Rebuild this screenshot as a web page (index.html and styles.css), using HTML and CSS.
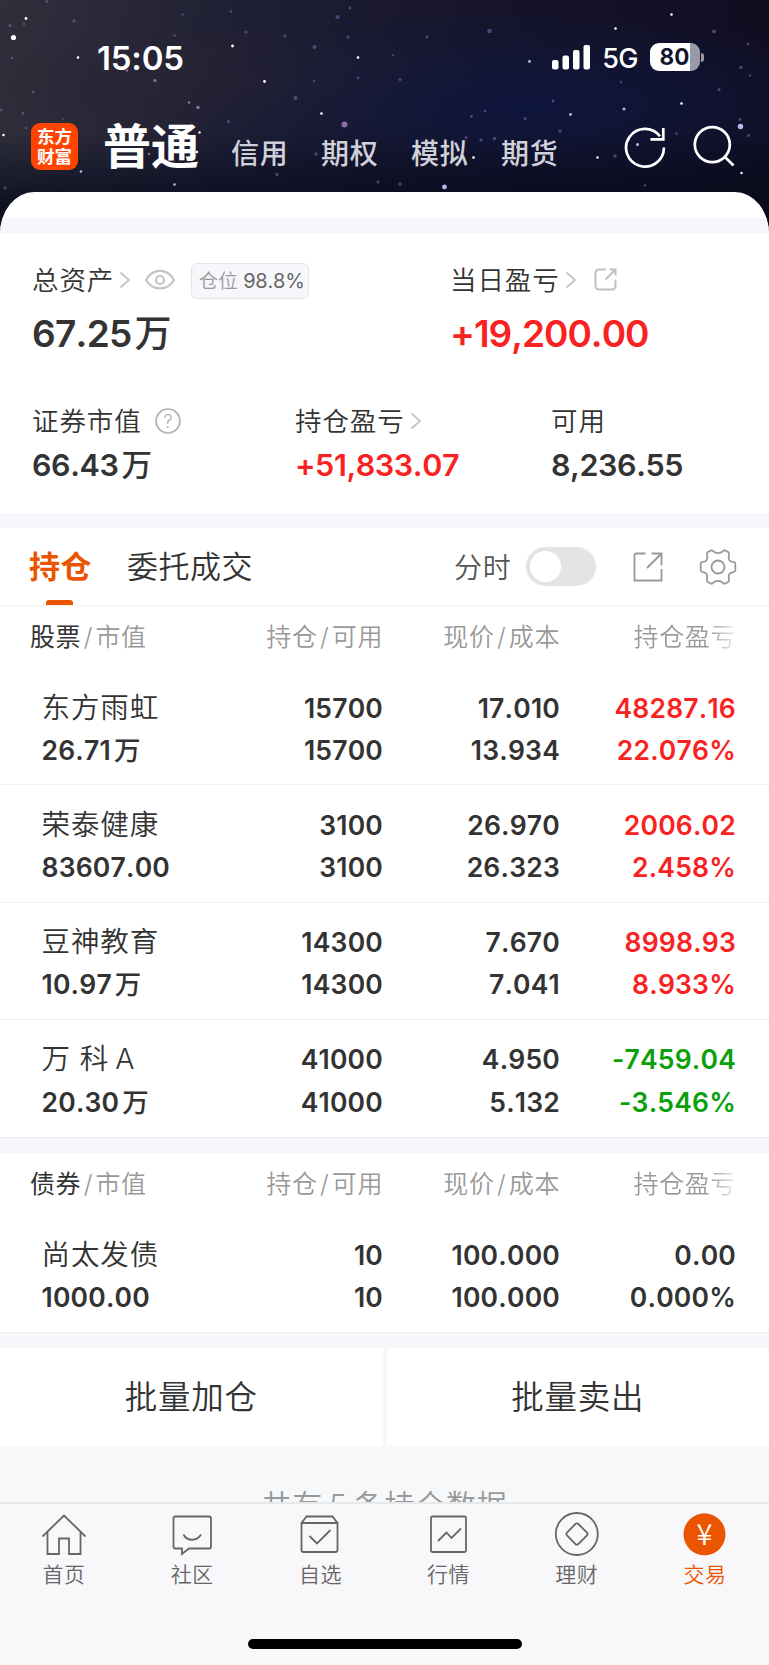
FILE: index.html
```
<!DOCTYPE html>
<html lang="zh-CN">
<head>
	<meta charset="UTF-8">
	<title>持仓</title>
	<link rel="stylesheet" href="styles.css">
</head>
<body>
<div class="app">

	<header class="top">
		<svg class="stars" viewBox="0 0 769 240">
			<g fill="#fff">
				<circle cx="13.5" cy="37.5" r="2.6"/><circle cx="26" cy="18.5" r="1.4"/><circle cx="78" cy="57.5" r="1.3"/>
				<circle cx="232.5" cy="46" r="1.4"/><circle cx="264.5" cy="81.5" r="1.4"/><circle cx="321.5" cy="113.5" r="1.3"/>
				<circle cx="358" cy="57.5" r="1.3"/><circle cx="3.5" cy="135" r="1.3"/><circle cx="199.5" cy="132.5" r="1.2"/>
				<circle cx="197" cy="152" r="1.2"/><circle cx="615.5" cy="28.5" r="1.3"/><circle cx="671.5" cy="14.5" r="1.3"/>
				<circle cx="681.5" cy="103.5" r="1.3"/><circle cx="473.5" cy="157.5" r="1.3"/><circle cx="597.5" cy="157.5" r="1.2"/>
				<circle cx="741.5" cy="173" r="1.2"/>
			</g>
			<g fill="#b4b9f0">
				<circle cx="740.5" cy="126.5" r="2.7"/><circle cx="444.5" cy="187" r="2.4"/><circle cx="529.5" cy="61.5" r="1.4"/>
				<circle cx="570.5" cy="114.5" r="1.4"/><circle cx="624" cy="109" r="1.5"/><circle cx="637.5" cy="144.5" r="1.5"/>
				<circle cx="518" cy="147" r="2"/><circle cx="81" cy="171.5" r="1.3"/><circle cx="174.5" cy="184.5" r="1.3"/>
				<circle cx="277" cy="153" r="1.5"/>
			</g>
			<g fill="#6c68b0" opacity=".6">
				<circle cx="47" cy="1.5" r="1.5"/><circle cx="10" cy="25.5" r="1.5"/><circle cx="24" cy="24" r="1.3"/>
				<circle cx="74" cy="21" r="1.8"/><circle cx="12" cy="58" r="1.3"/><circle cx="33" cy="92" r="1.4"/>
				<circle cx="182.5" cy="14.5" r="1.3"/><circle cx="174.5" cy="35.5" r="1.3"/><circle cx="246" cy="32" r="1.6"/>
				<circle cx="231" cy="11.5" r="1.3"/><circle cx="285" cy="36" r="1.4"/><circle cx="314.5" cy="47" r="2"/>
				<circle cx="337.5" cy="17" r="2"/><circle cx="350" cy="8" r="1.4"/><circle cx="348" cy="37" r="1.5"/>
				<circle cx="358" cy="78" r="1.4"/><circle cx="295.5" cy="98" r="2"/><circle cx="314" cy="81" r="1.2"/>
				<circle cx="228.5" cy="121.5" r="1.5"/><circle cx="316" cy="154" r="1.7"/><circle cx="23" cy="113.5" r="1.4"/>
				<circle cx="1" cy="110" r="1.5"/><circle cx="26" cy="128" r="1.3"/><circle cx="63" cy="119" r="1"/>
				<circle cx="427" cy="37" r="1.4"/><circle cx="489.5" cy="31" r="2.2"/><circle cx="400" cy="79.5" r="1.5"/>
				<circle cx="393" cy="55" r="1.1"/><circle cx="553" cy="101" r="1.4"/><circle cx="485" cy="111" r="1.3"/>
				<circle cx="471.5" cy="116.5" r="1.4"/><circle cx="525" cy="118.5" r="1.5"/><circle cx="560" cy="131" r="1.8"/>
				<circle cx="466" cy="137.5" r="1.5"/><circle cx="481" cy="140" r="1.6"/><circle cx="494.5" cy="138.5" r="1.8"/>
				<circle cx="676.5" cy="133.5" r="1.3"/><circle cx="714" cy="31.5" r="2"/><circle cx="748" cy="44" r="1.4"/>
				<circle cx="741" cy="67.5" r="1.7"/><circle cx="719" cy="89.5" r="1.5"/><circle cx="750" cy="75.5" r="1.2"/>
				<circle cx="740" cy="119.5" r="1.5"/><circle cx="748.5" cy="135.5" r="1.6"/><circle cx="615" cy="156" r="1.7"/>
				<circle cx="645" cy="185.5" r="1.2"/><circle cx="400" cy="184" r="1.7"/><circle cx="378" cy="182" r="1.5"/>
				<circle cx="277" cy="174.5" r="1.7"/><circle cx="5" cy="188" r="1.4"/><circle cx="621" cy="82" r="1.2"/>
			</g>
			<g fill="#a878b8" opacity=".85">
				<circle cx="344.5" cy="124.5" r="3"/><circle cx="198" cy="107.5" r="1.8"/><circle cx="189" cy="102.5" r="1.3"/>
				<circle cx="155" cy="80.5" r="1.6"/><circle cx="127" cy="70.5" r="1.2"/><circle cx="149" cy="154" r="1.2"/>
			</g>
		</svg>

		<div class="status">
			<span class="time">15:05</span>
			<div class="status_right">
				<svg class="signal" width="38" height="25" viewBox="0 0 38 25">
					<rect x="0" y="15" width="6.5" height="9.5" rx="2"/>
					<rect x="10.5" y="10.5" width="6.5" height="14" rx="2"/>
					<rect x="21" y="5" width="6.5" height="19.5" rx="2"/>
					<rect x="31.5" y="0" width="6.5" height="24.5" rx="2"/>
				</svg>
				<span class="net">5G</span>
				<div class="battery">80</div>
				<i class="battery_tip"></i>
			</div>
		</div>

		<nav class="accounts">
			<div class="logo"><span>东方</span><span>财富</span></div>
			<b class="current">普通</b>
			<span>信用</span>
			<span>期权</span>
			<span>模拟</span>
			<span>期货</span>
			<svg class="icon_reload" width="44" height="44" viewBox="0 0 44 44">
				<path d="M40.900 22.500A18.900 18.900 0 1 1 37 11.200M40.300 3v11.300H27.500"/>
			</svg>
			<svg class="icon_search" width="44" height="44" viewBox="0 0 44 44">
				<circle cx="21.3" cy="19.6" r="17.5"/><path d="M33.500 31.500l9 9"/>
			</svg>
		</nav>
	</header>

	<main class="sheet">
		<div class="gap gap_first"></div>

		<section class="summary">
			<div class="sum_big">
				<div class="cell">
					<div class="label">总资产
						<svg class="chev" width="12" height="18" viewBox="0 0 12 18"><path d="M1.500 1.500L10 9l-8.500 7.500"/></svg>
						<svg class="eye" width="30" height="22" viewBox="0 0 30 22"><path d="M1 11C7.500-1.200 22.500-1.200 29 11 22.500 22.200 7.500 22.200 1 11z"/><circle cx="15" cy="11" r="4"/></svg>
						<span class="badge">仓位 <em>98.8%</em></span>
					</div>
					<div class="num">67.25<span class="wan">万</span></div>
				</div>
				<div class="cell">
					<div class="label">当日盈亏
						<svg class="chev" width="12" height="18" viewBox="0 0 12 18"><path d="M1.500 1.500L10 9l-8.500 7.500"/></svg>
						<svg class="share" width="23" height="23" viewBox="0 0 23 23"><path d="M12 1.500H5a3.500 3.500 0 0 0-3.500 3.500v13A3.500 3.500 0 0 0 5 21.500h13a3.500 3.500 0 0 0 3.500-3.500v-6.500M15.500 1.500h6v6M21 2L11.500 11.500"/></svg>
					</div>
					<div class="num red">+19,200.00</div>
				</div>
			</div>
			<div class="sum_small">
				<div class="cell">
					<div class="label">证券市值
						<svg class="help" width="26" height="26" viewBox="0 0 26 26"><circle cx="13" cy="13" r="11.9"/><text x="13" y="19.5">?</text></svg>
					</div>
					<div class="num">66.43<span class="wan">万</span></div>
				</div>
				<div class="cell">
					<div class="label">持仓盈亏
						<svg class="chev" width="12" height="18" viewBox="0 0 12 18"><path d="M1.500 1.500L10 9l-8.500 7.500"/></svg>
					</div>
					<div class="num red">+51,833.07</div>
				</div>
				<div class="cell">
					<div class="label">可用</div>
					<div class="num">8,236.55</div>
				</div>
			</div>
		</section>

		<div class="gap"></div>

		<div class="tabs">
			<b class="tab active">持仓</b>
			<span class="tab">委托成交</span>
			<span class="minute">分时</span>
			<i class="switch"></i>
			<svg class="export" width="30" height="30" viewBox="0 0 30 30"><path d="M12.500 1.500H3a1.500 1.500 0 0 0-1.500 1.500v25.500h27V17M18.500 1.500h10v12M28.500 1.500L14 16"/></svg>
			<svg class="gear" width="38" height="36" viewBox="0 0 38 36"><path d="M8.500 3.200L12.500 1.200C14 1.200 14.500 4.200 19 4.200S24 1.200 25.500 1.200L29.500 3.200C31.500 5 28 7 30.500 11.200C32.500 14 36.300 12 36.300 14.500V21.500C36.300 24 32.500 22 30.500 24.800C28 29 31.500 31 29.500 32.800L25.500 34.800C24 34.800 23.500 31.800 19 31.800S14 34.800 12.500 34.800L8.500 32.800C6.500 31 10 29 7.500 24.800C5.500 22 1.700 24 1.700 21.500V14.500C1.700 12 5.500 14 7.500 11.200C10 7 6.500 5 8.500 3.200z"/><circle cx="19" cy="18" r="6.5"/></svg>
		</div>

		<section class="table">
			<div class="thead">
				<span class="kind"><b>股票</b><i>/</i>市值</span><span>持仓<i>/</i>可用</span><span>现价<i>/</i>成本</span><span class="fade">持仓盈亏</span>
			</div>
			<div class="row">
				<div><span class="name">东方雨虹</span><br>26.71<span class="wan">万</span></div>
				<div>15700<br>15700</div>
				<div>17.010<br>13.934</div>
				<div class="red">48287.16<br>22.076%</div>
			</div>
			<div class="row">
				<div><span class="name">荣泰健康</span><br>83607.00</div>
				<div>3100<br>3100</div>
				<div>26.970<br>26.323</div>
				<div class="red">2006.02<br>2.458%</div>
			</div>
			<div class="row">
				<div><span class="name">豆神教育</span><br>10.97<span class="wan">万</span></div>
				<div>14300<br>14300</div>
				<div>7.670<br>7.041</div>
				<div class="red">8998.93<br>8.933%</div>
			</div>
			<div class="row">
				<div><span class="name">万 科<span class="latin">A</span></span><br>20.30<span class="wan">万</span></div>
				<div>41000<br>41000</div>
				<div>4.950<br>5.132</div>
				<div class="green">-7459.04<br>-3.546%</div>
			</div>
		</section>

		<div class="gap gap_mid"></div>

		<section class="table">
			<div class="thead">
				<span class="kind"><b>债券</b><i>/</i>市值</span><span>持仓<i>/</i>可用</span><span>现价<i>/</i>成本</span><span class="fade">持仓盈亏</span>
			</div>
			<div class="row">
				<div><span class="name">尚太发债</span><br>1000.00</div>
				<div>10<br>10</div>
				<div>100.000<br>100.000</div>
				<div>0.00<br>0.000%</div>
			</div>
		</section>

		<div class="gap gap_mid"></div>

		<div class="batch">
			<div>批量加仓</div>
			<div>批量卖出</div>
		</div>

		<div class="total">共有<span>5</span>条持仓数据</div>
	</main>

	<footer class="bottom">
		<nav class="menu">
			<div>
				<svg width="46" height="46" viewBox="0 0 46 46"><path d="M1.500 24.500L23 3.500l21.500 21M6.500 20.500V42h11.500V26.500h10V42h11.500V20.500"/></svg>
				首页
			</div>
			<div>
				<svg width="46" height="46" viewBox="0 0 46 46"><path d="M6 4.500h34q2 0 2 2v28q0 2-2 2H20l-7 5.500v-5.500H6.500q-2 0-2-2v-28q0-2 1.500-2zM14.500 22.500c3.500 7 13.500 7 17.500 0"/></svg>
				社区
			</div>
			<div>
				<svg width="46" height="46" viewBox="0 0 46 46"><path d="M4.500 11h36v27q0 2-2 2h-32q-2 0-2-2zM4.500 11L9.500 4.500h26l5 6.500M12.500 24l7.500 7.500L33.500 18"/></svg>
				自选
			</div>
			<div>
				<svg width="46" height="46" viewBox="0 0 46 46"><rect x="5" y="4.5" width="35" height="35.5" rx="1.5"/><path d="M12 29l8.500-8.500 5 5.500 9.500-9.500"/></svg>
				行情
			</div>
			<div>
				<svg width="46" height="46" viewBox="0 0 46 46"><circle cx="22.8" cy="22" r="21"/><path d="M21.500 11.800L13 20.700q-1.300 1.300 0 2.600l8.500 8.900q1.300 1 2.600 0l8.900-8.900q1.300-1.300 0-2.600l-8.900-8.900q-1.300-1-2.600 0z"/></svg>
				理财
			</div>
			<div class="on">
				<svg width="46" height="46" viewBox="0 0 46 46"><circle cx="22.5" cy="22.3" r="21"/><text x="22.5" y="33">¥</text></svg>
				交易
			</div>
		</nav>
		<div class="home_bar"></div>
	</footer>

</div>
</body>
</html>
```
FILE: styles.css
```
*{
	box-sizing: border-box;
}
body{
	margin: 0;
	font-family: Inter, "Noto Sans CJK SC", sans-serif;
	font-kerning: none;
	color: #333;
	background: #f6f8fa;
}
i, em{
	font-style: normal;
}
svg{
	flex: none;
}
.app{
	width: 769px;
	height: 1665px;
	overflow: hidden;
	display: flex;
	flex-direction: column;
}
.red{
	color: #f92222;
}
.green{
	color: #0aa00a;
}

/* header */
.top{
	position: relative;
	height: 240px;
	flex: none;
	color: #fff;
	background:
		linear-gradient(180deg, rgba(8,10,30,0) 55%, rgba(8,10,28,.8) 85%),
		radial-gradient(ellipse 380px 95px at 530px 105px, rgba(14,22,62,.9), rgba(14,22,62,0)),
		radial-gradient(ellipse 300px 60px at 230px 85px, rgba(42,36,48,.7), rgba(42,36,48,0)),
		linear-gradient(100deg, #30303c 0%, #1d1d33 35%, #15132a 65%, #100d20 100%);
}
.stars{
	position: absolute;
	left: 0;
	top: 0;
	width: 769px;
	height: 240px;
}
.status{
	position: relative;
	height: 108px;
	padding: 6px 65px 0 97px;
	display: flex;
	align-items: center;
	justify-content: space-between;
}
.time{
	padding-top: 1px;
	font-size: 33px;
	font-weight: 600;
	letter-spacing: -0.2px;
}
.status_right{
	display: flex;
	align-items: center;
}
.signal{
	fill: #fff;
}
.net{
	margin: 3px 12px 0 12px;
	font-size: 27px;
	font-weight: 450;
	letter-spacing: -0.5px;
}
.battery{
	width: 50px;
	height: 28px;
	padding-right: 1px;
	line-height: 28px;
	border-radius: 9px;
	background: linear-gradient(90deg, #fff 40px, #9a9aa6 40px);
	color: #14142c;
	font-size: 22.5px;
	font-weight: 700;
	text-align: center;
}
.battery_tip{
	width: 3px;
	height: 9px;
	margin-left: 1px;
	border-radius: 0 3px 3px 0;
	background: #9a9aa6;
}
.accounts{
	position: relative;
	height: 77px;
	padding-left: 31px;
	display: flex;
	align-items: center;
}
.accounts > span{
	width: 58px;
	margin: 15px 32px 0 0;
	font-size: 28px;
	font-weight: 500;
	letter-spacing: 0.8px;
	line-height: 34px;
	white-space: nowrap;
	color: #d0d0d8;
}
.logo{
	width: 47px;
	height: 47px;
	border-radius: 9px;
	background: #ff4400;
	padding-top: 4px;
	display: flex;
	flex-direction: column;
	align-items: center;
	font-size: 17.5px;
	font-weight: 700;
	line-height: 19.5px;
}
.accounts .current{
	width: 96px;
	margin: 0 32px 0 25px;
	font-size: 48px;
	font-weight: 700;
	line-height: 60px;
	white-space: nowrap;
}
.icon_reload, .icon_search{
	margin-left: 32px;
	fill: none;
	stroke: #fff;
	stroke-width: 2.7;
}
.icon_search{
	margin-left: 24px;
}

/* sheet */
.sheet{
	position: relative;
	height: 1310px;
	margin-top: -48px;
	flex: none;
	overflow: hidden;
	border-radius: 34px 34px 0 0 / 42px 42px 0 0;
	background: #fff;
}
.gap{
	height: 15px;
	background: #f6f7fa;
}
.gap_first{
	margin-top: 26px;
}
.gap_mid{
	height: 16px;
	border-top: 1px solid #eff0f2;
}

/* assets */
.summary{
	height: 280px;
	padding: 25px 0 0 32px;
}
.summary svg{
	margin-top: 3px;
	fill: none;
}
.sum_big, .sum_small{
	display: grid;
	grid-template-columns: 418px 1fr;
}
.sum_small{
	grid-template-columns: 263px 256px 1fr;
	margin-top: 31px;
}
.label{
	height: 40px;
	display: flex;
	align-items: center;
	font-size: 26.5px;
	font-weight: 350;
	letter-spacing: 0.9px;
	white-space: nowrap;
}
.sum_big .num{
	height: 70px;
	padding-top: 1px;
	line-height: 70px;
	font-size: 37px;
	font-weight: 600;
	letter-spacing: -0.7px;
}
.sum_big .red{
	letter-spacing: -1px;
}
.sum_small .num{
	height: 50px;
	padding-top: 1px;
	line-height: 50px;
	font-size: 30.5px;
	font-weight: 600;
	letter-spacing: -0.4px;
}
.wan{
	margin-left: 3px;
	font-weight: 500;
}
.chev{
	margin-left: 5px;
	stroke: #c4c4c4;
	stroke-width: 1.8;
}
.eye{
	margin-left: 14px;
	stroke: #c4c4c4;
	stroke-width: 2.2;
}
.share{
	margin-left: 17px;
	stroke: #c0c0c0;
	stroke-width: 2;
}
.help{
	margin-left: 13px;
	stroke: #b4b4b4;
	stroke-width: 1.8;
}
.help text{
	fill: #aaa;
	stroke: none;
	font-size: 18px;
	text-anchor: middle;
	letter-spacing: 0;
}
.badge{
	width: 118px;
	height: 36px;
	margin: 5px 0 0 16px;
	padding-left: 3px;
	border: 1.5px solid #e4e5e9;
	border-radius: 6px;
	background: #f6f7fa;
	font-size: 19.5px;
	line-height: 34px;
	letter-spacing: 0;
	text-align: center;
	color: #999;
}
.badge em{
	font-size: 20px;
	font-weight: 400;
	letter-spacing: -0.2px;
	color: #666;
}

/* tabs */
.tabs{
	height: 78px;
	padding-left: 29px;
	border-bottom: 1px solid #f0f0f0;
	display: flex;
	align-items: center;
	white-space: nowrap;
}
.tab{
	height: 77px;
	line-height: 77px;
	font-size: 31px;
	font-weight: 350;
	letter-spacing: 0.5px;
}
.active{
	width: 63px;
	margin-right: 35px;
	font-weight: 700;
	color: #ec5500;
	display: flex;
	flex-direction: column;
}
.active::after{
	content: "";
	width: 27px;
	height: 5px;
	margin: -5px 0 0 17px;
	flex: none;
	border-radius: 3px 3px 0 0;
	background: #ec5500;
}
.minute{
	margin: -2px 0 0 201px;
	font-size: 28px;
	font-weight: 350;
	letter-spacing: 0.7px;
	color: #555;
}
.switch{
	width: 70px;
	height: 39px;
	margin-left: 15px;
	padding: 4px;
	border-radius: 20px;
	background: #e4e4e6;
}
.switch::before{
	content: "";
	display: block;
	width: 31px;
	height: 31px;
	border-radius: 50%;
	background: #fff;
}
.export, .gear{
	margin-left: 37px;
	fill: none;
	stroke: #999;
	stroke-width: 1.8;
}
.gear{
	margin-left: 36px;
}

/* positions */
.thead, .row{
	display: grid;
	grid-template-columns: 161px 180px 177px 176px;
	padding-left: 42px;
	text-align: right;
	white-space: nowrap;
}
.thead{
	height: 62px;
	line-height: 63px;
	font-size: 25px;
	font-weight: 350;
	letter-spacing: 0.6px;
	color: #999;
}
.thead i{
	margin: 0 2.5px;
}
.thead .kind{
	margin-left: -12px;
	text-align: left;
}
.kind b{
	font-weight: 400;
	color: #333;
}
.fade{
	background: linear-gradient(90deg, #999 calc(100% - 28px), #eee);
	-webkit-background-clip: text;
	background-clip: text;
	color: transparent;
}
.row{
	height: 117.25px;
	padding-top: 18.5px;
	border-bottom: 1px solid #f0f0f2;
	font-size: 26.5px;
	font-weight: 600;
	line-height: 42.4px;
	letter-spacing: 0.2px;
}
.row:last-child{
	border-bottom: 0;
}
.row > div:first-child{
	text-align: left;
	margin-left: -0.5px;
}
.name{
	font-size: 28.5px;
	font-weight: 350;
	letter-spacing: 0.9px;
}
.latin{
	margin-left: 6px;
}

.batch{
	display: grid;
	grid-template-columns: 1fr 1fr;
	gap: 4px;
	height: 98px;
	background: #f6f8fa;
	font-size: 32.5px;
	font-weight: 350;
	letter-spacing: 0.8px;
	text-align: center;
}
.batch div{
	height: 98px;
	padding-top: 2px;
	line-height: 96px;
	background: #fff;
}
.total{
	height: 100px;
	padding-top: 37px;
	background: #f6f8fa;
	font-size: 30px;
	font-weight: 350;
	line-height: 44px;
	letter-spacing: 0.8px;
	text-align: center;
	color: #999;
}
.total span{
	margin: 0 6px;
}

/* bottom bar */
.bottom{
	height: 163px;
	flex: none;
	border-top: 2px solid #e6eaec;
	background: #f8f8fb;
}
.menu{
	height: 135px;
	padding-top: 8px;
	display: grid;
	grid-template-columns: repeat(6, 1fr);
}
.menu div{
	display: flex;
	flex-direction: column;
	align-items: center;
	font-size: 21px;
	font-weight: 350;
	line-height: 34px;
	letter-spacing: 0.5px;
	color: #666;
}
.menu svg{
	fill: none;
	stroke: #666;
	stroke-width: 1.8;
}
.menu .on{
	color: #ec5500;
}
.on circle{
	fill: #ec5500;
	stroke: none;
}
.on text{
	fill: #fff;
	stroke: none;
	font-family: "Noto Sans CJK SC", sans-serif;
	font-size: 29px;
	text-anchor: middle;
	letter-spacing: 0;
}
.home_bar{
	width: 274px;
	height: 10px;
	margin: 0 auto;
	border-radius: 5px;
	background: #000;
}
```
